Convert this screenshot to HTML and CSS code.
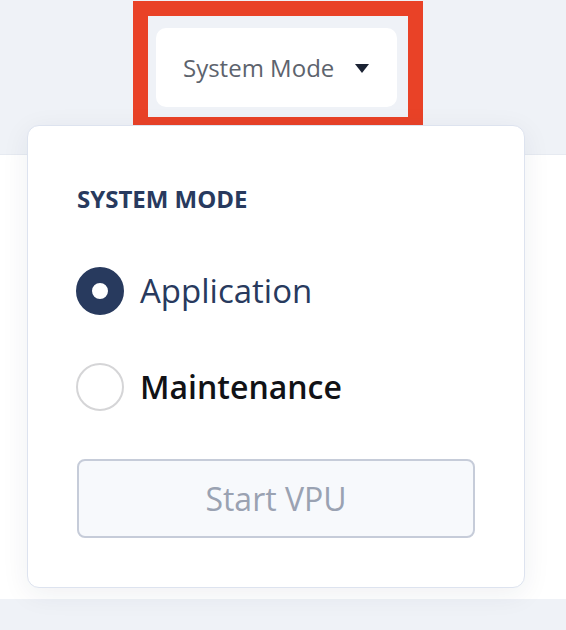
FILE: index.html
```html
<!DOCTYPE html>
<html lang="en">
<head>
<meta charset="utf-8">
<title>System Mode</title>
<link rel="stylesheet" href="styles.css">
</head>
<body>
<div class="page">
  <header class="topbar">
    <button class="mode-btn" type="button">
      <span class="mode-label">System Mode</span>
      <svg class="caret" width="14" height="9" viewBox="0 0 14 9"><path d="M0 0H14L7 9Z" fill="#1b2233"/></svg>
    </button>
  </header>
  <main class="content"></main>
  <footer class="bottombar"></footer>

  <div class="highlight"></div>

  <div class="dropdown">
    <h2 class="dd-title">SYSTEM MODE</h2>
    <div class="option option-selected">
      <span class="radio radio-on"></span>
      <span class="option-label">Application</span>
    </div>
    <div class="option">
      <span class="radio"></span>
      <span class="option-label option-label-strong">Maintenance</span>
    </div>
    <button class="start-btn" type="button" disabled>Start VPU</button>
  </div>
</div>
</body>
</html>
```

FILE: styles.css
```css
* { box-sizing: border-box; }
html, body { margin: 0; padding: 0; }
body {
  font-family: "Open Sans", "Noto Sans", sans-serif;
  background: #ffffff;
  width: 566px;
  height: 630px;
  overflow: hidden;
}
.page {
  position: relative;
  height: 630px;
  display: flex;
  flex-direction: column;
}
.topbar {
  height: 155px;
  flex: none;
  background: #eff2f7;
  border-bottom: 1px solid #e6eaf1;
  padding: 28px 0 0 156px;
}
.mode-btn {
  width: 241px;
  height: 79px;
  background: #ffffff;
  border: none;
  border-radius: 10px;
  display: flex;
  align-items: center;
  padding: 0 0 0 27px;
  gap: 21px;
  font-family: inherit;
  cursor: pointer;
}
.mode-label {
  font-size: 24px;
  line-height: 24px;
  color: #5d636d;
}
.caret { display: block; margin-top: 1px; }
.content {
  flex: 1;
  background: #ffffff;
}
.bottombar {
  height: 31px;
  flex: none;
  background: #eff2f7;
}
.highlight {
  position: absolute;
  left: 133px;
  top: 1px;
  width: 290px;
  height: 131px;
  border: 15px solid #e94227;
  pointer-events: none;
}
.dropdown {
  position: absolute;
  left: 27px;
  top: 125px;
  width: 498px;
  height: 463px;
  background: #ffffff;
  border: 1px solid #dde3ef;
  border-radius: 12px;
  box-shadow: 0 6px 28px rgba(30, 40, 70, 0.07);
  padding: 57px 49px 49px 48px;
  display: flex;
  flex-direction: column;
}
.dd-title {
  margin: 0 0 0 1px;
  font-size: 24px;
  line-height: 32px;
  font-weight: 700;
  color: #283a5e;
}
.option {
  display: flex;
  align-items: center;
  gap: 16px;
  height: 48px;
  margin-top: 48px;
}
.option-selected { margin-top: 52px; }
.radio {
  width: 48px;
  height: 48px;
  border-radius: 50%;
  border: 2px solid #d5d5d7;
  flex: none;
  background: #ffffff;
}
.radio-on {
  border: 16px solid #283a5e;
  background: #ffffff;
}
.option-label {
  font-size: 33px;
  line-height: 48px;
  color: #283a5e;
  font-weight: 400;
}
.option-label-strong {
  font-size: 32px;
  color: #111216;
  font-weight: 600;
}
.start-btn {
  margin: 48px 0 0 1px;
  height: 79px;
  width: 398px;
  border: 2px solid #c6ccd9;
  border-radius: 8px;
  background: #f7f9fc;
  color: #9aa2b2;
  font-family: inherit;
  font-size: 32px;
  line-height: 40px;
  padding: 0;
}
```
